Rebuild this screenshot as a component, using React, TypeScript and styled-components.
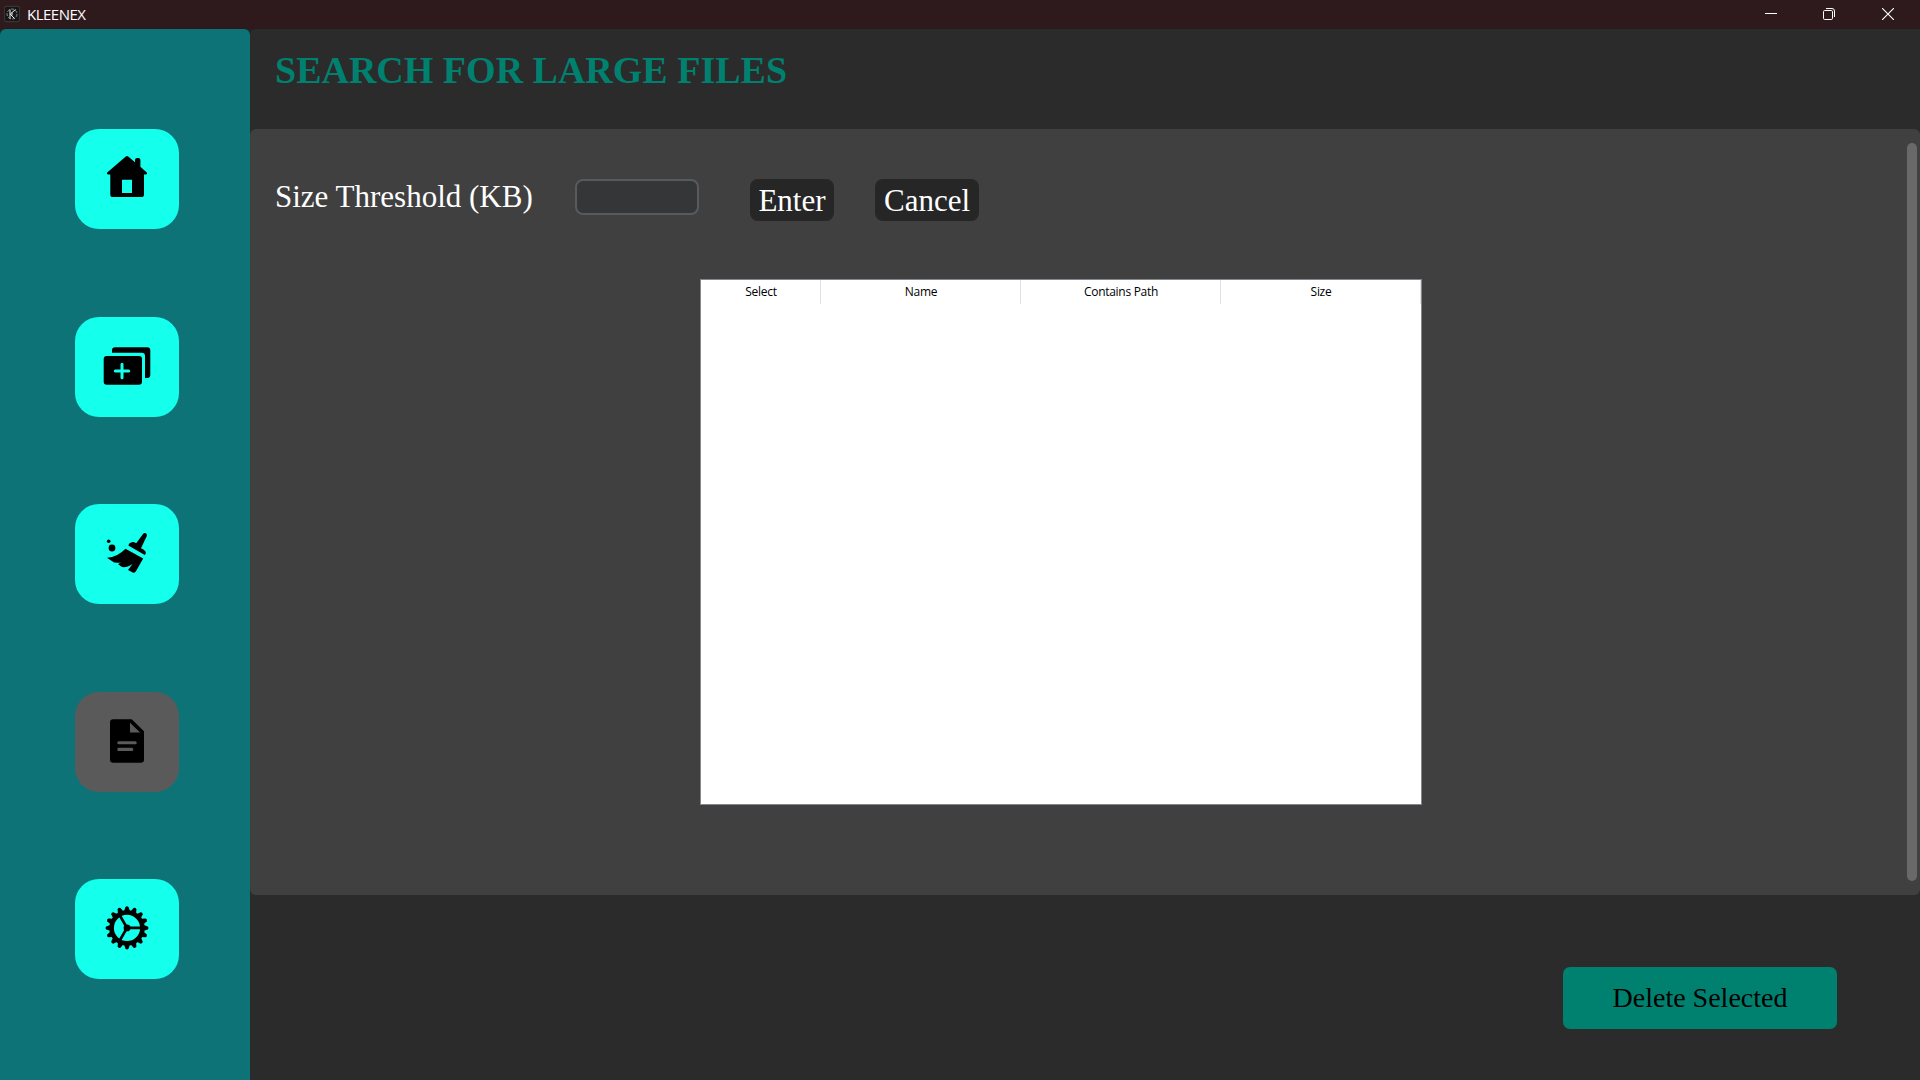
import React from "react";
import styled, { createGlobalStyle } from "styled-components";

const GlobalStyle = createGlobalStyle`
  * { box-sizing: border-box; }
  body { margin: 0; background: #242424; overflow: hidden; }
  button, input { font: inherit; border: 0; margin: 0; padding: 0; outline: none; }
  svg { display: block; }
`;

const serif = `"Liberation Serif", "Times New Roman", serif`;
const sans = `"Open Sans", "Noto Sans", sans-serif`;

const Window = styled.div`
  width: 1920px;
  height: 1080px;
  display: flex;
  flex-direction: column;
  background: #242424;
`;

const TitleBar = styled.header`
  height: 29px;
  flex: none;
  display: flex;
  align-items: flex-start;
  padding-left: 4px;
  background: linear-gradient(#2e1a1d 0 28px, #291b1c 28px);
  color: #fff;
`;

const AppName = styled.span`
  flex: 1;
  margin-left: 7px;
  font: 15px/29px ${sans};
  letter-spacing: -0.5px;
`;

const WindowControls = styled.div`
  display: flex;
  height: 28px;
  margin-right: 2px;
`;

const ControlButton = styled.button<{ $width: number }>`
  width: ${(p) => p.$width}px;
  display: flex;
  align-items: center;
  justify-content: center;
  background: none;
  color: #fff;
`;

const Body = styled.div`
  flex: 1;
  display: flex;
  min-height: 0;
`;

const Sidebar = styled.nav`
  width: 250px;
  flex: none;
  display: flex;
  flex-direction: column;
  align-items: flex-start;
  gap: 87.5px;
  padding: 100px 0 0 75px;
  background: #0d7377;
  border-radius: 6px 6px 0 0;
`;

const NavButton = styled.button<{ $active?: boolean }>`
  width: 104px;
  height: 100px;
  flex: none;
  border-radius: 24px;
  background: ${(p) => (p.$active ? "#5a5a5a" : "#14ffec")};
  color: #000;
`;

const Main = styled.main`
  flex: 1;
  display: flex;
  flex-direction: column;
`;

const PageHeader = styled.section`
  height: 100px;
  flex: none;
  padding: 18px 0 0 25px;
  background: #2b2b2b;
  border-radius: 6px 0 0 0;
`;

const PageTitle = styled.h1`
  margin: 0;
  font: bold 38px/46px ${serif};
  color: #008170;
  white-space: nowrap;
`;

const Backdrop = styled.div`
  height: 766px;
  flex: none;
  background: #2b2b2b;
`;

const Panel = styled.section`
  height: 100%;
  display: flex;
  background: #404040;
  border-radius: 6px;
`;

const PanelContent = styled.div`
  flex: 1;
  padding-top: 50px;
`;

const FormRow = styled.div`
  height: 42px;
  display: flex;
  align-items: flex-start;
  padding-left: 25px;
`;

const Label = styled.label`
  width: 300px;
  font: 31px/36px ${serif};
  color: #fff;
  white-space: nowrap;
`;

const Entry = styled.input`
  width: 124px;
  height: 36px;
  margin-right: 51px;
  background: #343638;
  border: 2px solid #565b5e;
  border-radius: 8px;
`;

const ActionButton = styled.button<{ $width: number }>`
  width: ${(p) => p.$width}px;
  height: 42px;
  margin-right: 41px;
  padding-top: 1px;
  border-radius: 8px;
  background: #262626;
  color: #fff;
  font: 31px/41px ${serif};
`;

const Table = styled.div`
  width: 722px;
  height: 526px;
  margin: 58px 0 0 450px;
  border: 1px solid #828790;
  background: #fff;
`;

const TableHeader = styled.div`
  display: flex;
`;

const HeaderCell = styled.div<{ $width: number }>`
  width: ${(p) => p.$width}px;
  height: 24px;
  padding-left: 1px;
  border-right: 1px solid #e2e2e2;
  text-align: center;
  font: 12px/24px ${sans};
  letter-spacing: -0.3px;
  color: #000;
`;

const ScrollTrack = styled.div`
  width: 13px;
  padding: 14px 3px 14px 0;
`;

const ScrollThumb = styled.div`
  width: 10px;
  height: 738px;
  border-radius: 5px;
  background: #696969;
`;

const Footer = styled.footer`
  flex: 1;
  display: flex;
  justify-content: flex-end;
  padding: 72px 83px 0 0;
  background: #2b2b2b;
`;

const DeleteButton = styled.button`
  width: 274px;
  height: 62px;
  border-radius: 7px;
  background: #008170;
  color: #000;
  font: 28px/60px ${serif};
`;

const LogoIcon = () => (
  <svg width="16" height="28" viewBox="0 -6 16 28" fill="none">
    <rect x="0.3" y="0.3" width="15.4" height="15.4" rx="2" fill="#171717" stroke="#555" strokeWidth="0.6" />
    <circle cx="8" cy="8" r="5" stroke="#aaa" strokeWidth="0.8" strokeDasharray="3 1.4" />
    <path d="M6 3.5v9M11.5 3.5 6.2 8.2l4.3 4.3M8 6.5v3" stroke="#eee" strokeWidth="1" />
  </svg>
);

const IconFrame = ({ children }: { children: React.ReactNode }) => (
  <svg width="104" height="100" viewBox="0 0 104 100">{children}</svg>
);

const HomeIcon = () => (
  <IconFrame>
    <path
      fillRule="evenodd"
      d="M50.8 27.6q1.2-1 2.4 0L60 33.3V31q0-2 2-2h1.4q2 0 2 2v6.8l6.1 5.4q.9.8.5 1.5-.4.7-1.3.7H69v20q0 2.7-2.7 2.7H38q-2.7 0-2.7-2.7v-20h-2q-.9 0-1.3-.7-.4-.7.5-1.5zM47 50.8V64h10V50.8z"
    />
  </IconFrame>
);

const AddCopyIcon = () => (
  <IconFrame>
    <rect x="28.7" y="39" width="38.3" height="28.7" rx="3" />
    <path d="M37 35.7v-2.2q0-3.2 3.2-3.2h32q3.1 0 3.1 3.2v24.3q0 3.2-3.2 3.2H70V38.9q0-3.2-3.2-3.2z" />
    <path d="M47 47.3v13.4M40.3 54h13.4" stroke="#14ffec" strokeWidth="3" strokeLinecap="round" />
  </IconFrame>
);

const BroomIcon = () => (
  <IconFrame>
    <path d="M68.2 29.8q1-1.4 2.7-.5 1.6.9.9 2.7L66 44.2q4.8 2.2 4.8 4.2.1 1.5-1 2.5L53.3 41.5q.6-2.8 3.5-3.3 2-.4 4.4 1.1z" />
    <path d="M50.5 44.7 68.2 54.6 60.8 67.6Q59.7 69.3 57.7 68.4L53 66.1 57.5 60Q49.5 65 45.8 62.3L43 60 46 58.4Q40 59.8 36.8 57L32 53.8Q42.5 53 50.5 44.7z" />
    <circle cx="33.7" cy="37.3" r="1.8" />
    <circle cx="37" cy="44" r="3.4" />
  </IconFrame>
);

const FileIcon = () => (
  <IconFrame>
    <path d="M38.2 27.3h18.5L69 39.2v28.3q0 3.2-3.2 3.2H38.2q-3.2 0-3.2-3.2v-37q0-3.2 3.2-3.2z" />
    <path d="M55 30.8v9.8h10.1z" fill="#5a5a5a" />
    <path d="M43.8 50.7h16.4M43.8 57.4h13" stroke="#5a5a5a" strokeWidth="3.1" strokeLinecap="round" />
  </IconFrame>
);

const toothCount = 16;
const teeth = Array.from({ length: toothCount }, (_, i) => (i * 360) / toothCount);

const GearIcon = () => (
  <IconFrame>
    <g transform="translate(52 48.9)">
      {teeth.map((angle) => (
        <path key={angle} transform={`rotate(${angle})`} d="M-2.9-16.8-1.5-20.8Q0-22.3 1.5-20.8L2.9-16.8z" />
      ))}
      <circle r="15.4" fill="none" stroke="#000" strokeWidth="4.6" />
      <circle r="3.4" />
      <path d="M0 0H14M0 0-7 12.1M0 0-7-12.1" stroke="#000" strokeWidth="2.7" />
    </g>
  </IconFrame>
);

const navItems = [
  { name: "Home", Icon: HomeIcon },
  { name: "Duplicates", Icon: AddCopyIcon },
  { name: "Clean", Icon: BroomIcon },
  { name: "Large files", Icon: FileIcon, active: true },
  { name: "Settings", Icon: GearIcon },
];

const columns = [
  { title: "Select", width: 120 },
  { title: "Name", width: 200 },
  { title: "Contains Path", width: 200 },
  { title: "Size", width: 200 },
];

export default function App() {
  return (
    <Window>
      <GlobalStyle />
      <TitleBar>
        <LogoIcon />
        <AppName>KLEENEX</AppName>
        <WindowControls>
          <ControlButton $width={58} aria-label="Minimize">
            <svg width="12" height="12"><path d="M0 5.5h12" stroke="currentColor" /></svg>
          </ControlButton>
          <ControlButton $width={58} aria-label="Restore">
            <svg width="12" height="12" fill="none" stroke="currentColor">
              <rect x="0.5" y="2.5" width="9" height="9" rx="1.2" />
              <path d="M3 .5h6q2.5 0 2.5 2.5v6" />
            </svg>
          </ControlButton>
          <ControlButton $width={60} aria-label="Close">
            <svg width="12" height="12"><path d="M0 0 12 12M12 0 0 12" stroke="currentColor" strokeWidth="1.1" /></svg>
          </ControlButton>
        </WindowControls>
      </TitleBar>
      <Body>
        <Sidebar>
          {navItems.map(({ name, Icon, active }) => (
            <NavButton key={name} $active={active} aria-label={name}>
              <Icon />
            </NavButton>
          ))}
        </Sidebar>
        <Main>
          <PageHeader>
            <PageTitle>SEARCH FOR LARGE FILES</PageTitle>
          </PageHeader>
          <Backdrop>
            <Panel>
              <PanelContent>
                <FormRow>
                  <Label>Size Threshold (KB)</Label>
                  <Entry />
                  <ActionButton $width={84}>Enter</ActionButton>
                  <ActionButton $width={104}>Cancel</ActionButton>
                </FormRow>
                <Table>
                  <TableHeader>
                    {columns.map((column) => (
                      <HeaderCell key={column.title} $width={column.width}>
                        {column.title}
                      </HeaderCell>
                    ))}
                  </TableHeader>
                </Table>
              </PanelContent>
              <ScrollTrack>
                <ScrollThumb />
              </ScrollTrack>
            </Panel>
          </Backdrop>
          <Footer>
            <DeleteButton>Delete Selected</DeleteButton>
          </Footer>
        </Main>
      </Body>
    </Window>
  );
}
